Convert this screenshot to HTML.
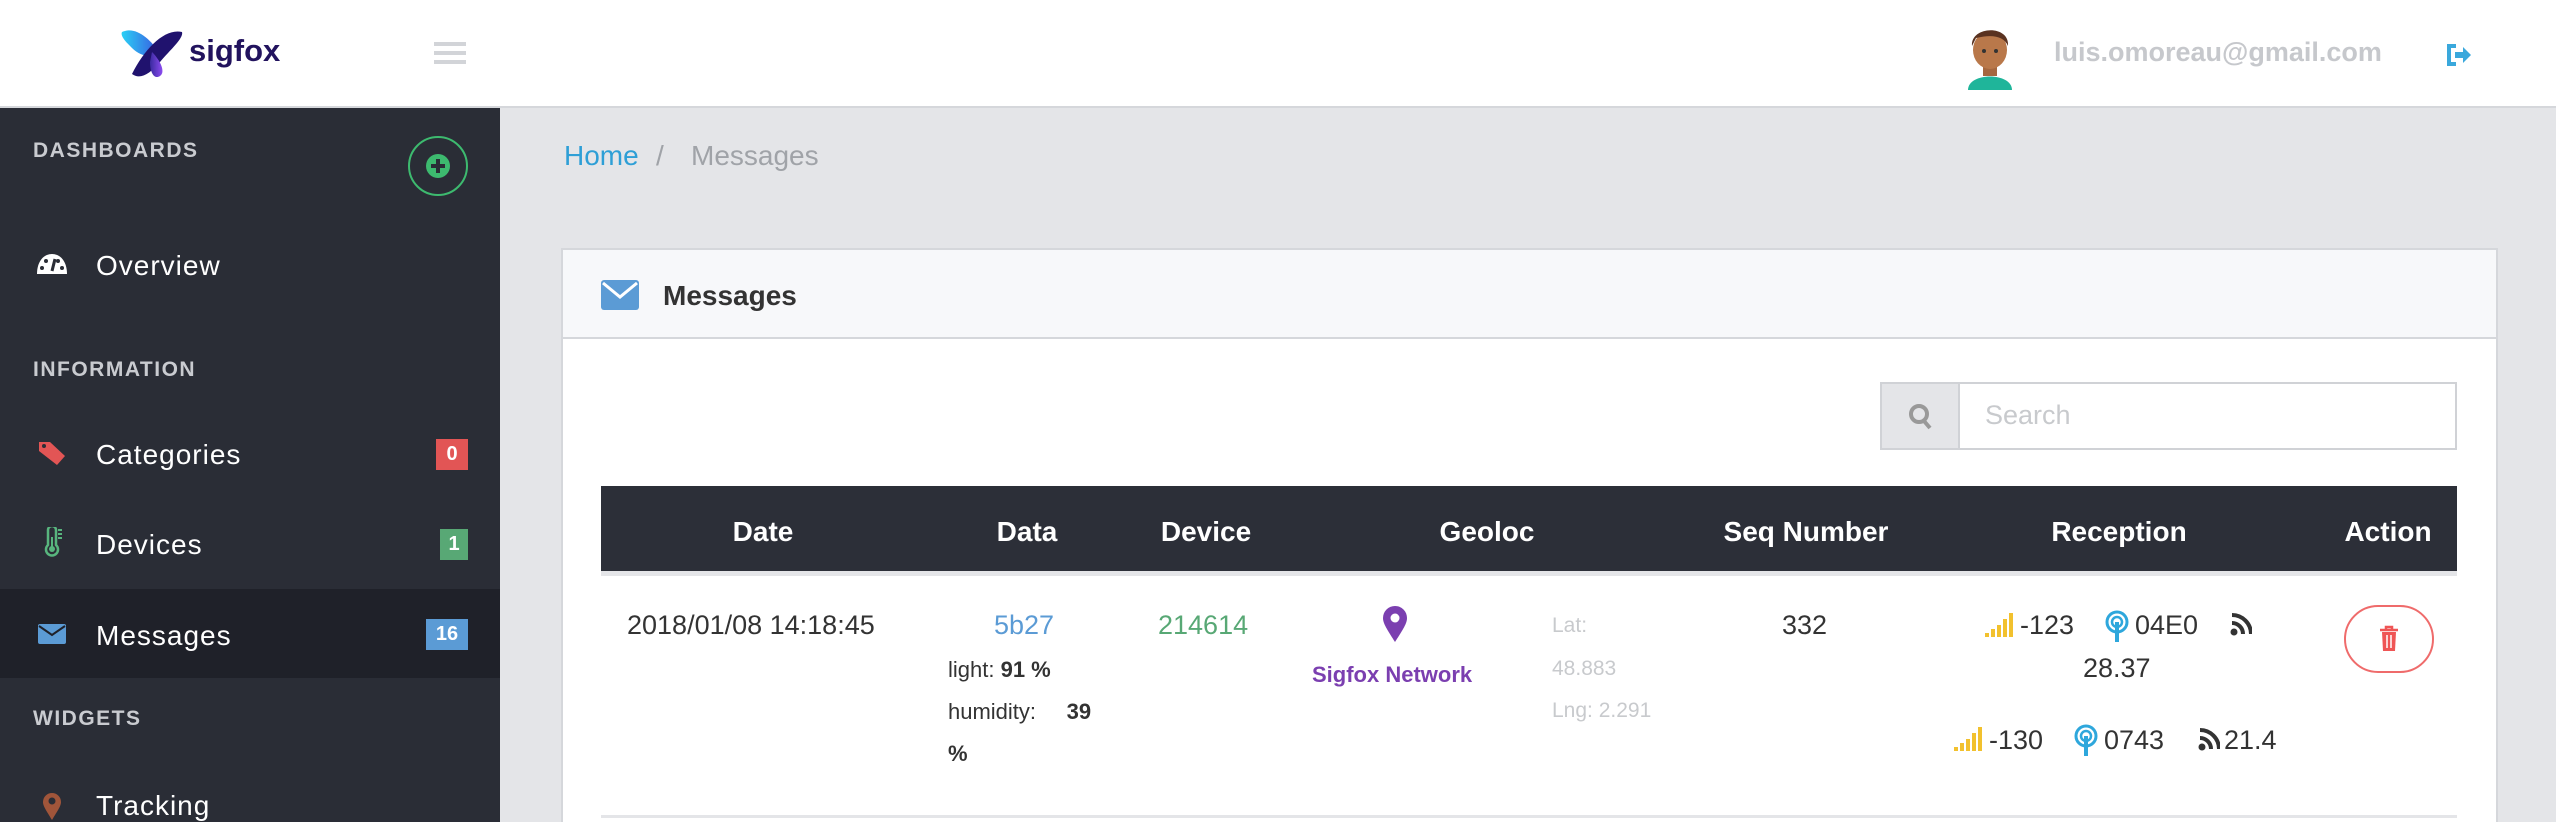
<!DOCTYPE html>
<html><head><meta charset="utf-8"><style>
*{margin:0;padding:0;box-sizing:border-box}
html{width:2556px;height:822px;overflow:hidden}
body{width:2556px;height:822px;overflow:hidden;background:#e4e5e8;font-family:"Liberation Sans",sans-serif;position:relative}
.a{position:absolute;white-space:nowrap}
.hdr{left:0;top:0;width:2556px;height:108px;background:#fff;border-bottom:2px solid #d5d7db}
.side{left:0;top:108px;width:500px;height:714px;background:#2a2d36}
.sec{color:#c9cbd0;font-size:21px;font-weight:bold;letter-spacing:1.5px;left:33px}
.item{color:#fff;font-size:28px;left:96px;letter-spacing:1px}
.badge{color:#fff;font-size:20px;font-weight:bold;text-align:center;height:31px;line-height:31px}
.th{color:#fff;font-size:28px;font-weight:bold;transform:translateX(-50%)}
.td{color:#333;font-size:27px}
.sm{color:#333;font-size:22px}
</style></head><body>
<div class="a hdr"></div>
<svg class="a" style="left:120px;top:28px" width="65" height="52" viewBox="0 0 65 52">
<defs><linearGradient id="g1" x1="0" x2="1"><stop offset="0" stop-color="#2ad0f5"/><stop offset="1" stop-color="#3a56e0"/></linearGradient>
<linearGradient id="g2" x1="0" x2="1"><stop offset="0" stop-color="#3a2aa0"/><stop offset="1" stop-color="#8c4cf0"/></linearGradient></defs>
<path d="M2 4 C15 -2 30 10 40 26 C30 30 20 28 12 20 C6 14 0 8 2 4Z" fill="url(#g1)"/>
<path d="M62 4 C45 0 25 20 12 46 C20 52 30 46 40 34 C50 22 64 10 62 4Z" fill="#20126e"/>
<path d="M32 24 C40 32 46 44 40 48 C34 52 30 44 30 34Z" fill="url(#g2)"/>
</svg>
<div class="a" style="left:189px;top:33px;font-size:31px;font-weight:bold;color:#22135e">sigfox</div>
<div class="a" style="left:434px;top:42px;width:32px;height:4px;background:#d2d4d8;box-shadow:0 9px 0 #d2d4d8,0 18px 0 #d2d4d8"></div>
<svg class="a" style="left:1962px;top:20px" width="56" height="70" viewBox="0 0 56 70">
<path d="M6 70 C6 52 50 52 50 70Z" fill="#1fb59a"/>
<rect x="21" y="44" width="14" height="12" fill="#a5673f"/>
<ellipse cx="28" cy="30" rx="17" ry="19" fill="#b9784a"/>
<path d="M10 26 C8 6 48 4 46 26 C42 16 30 14 14 18Z" fill="#5a3220"/>
<circle cx="22" cy="31" r="2" fill="#333"/><circle cx="34" cy="31" r="2" fill="#333"/>
</svg>
<div class="a" style="left:2054px;top:37px;font-size:27px;font-weight:bold;color:#c6c8cc">luis.omoreau@gmail.com</div>
<svg class="a" style="left:2446px;top:44px" width="26" height="22" viewBox="0 0 26 22"><path d="M10 2H3v18h7" stroke="#3aa8dc" stroke-width="4" fill="none"/><path d="M9 8h8V3l8 8-8 8v-5H9z" fill="#3aa8dc"/></svg>
<div class="a side"></div>
<div class="a" style="left:0;top:589px;width:500px;height:89px;background:#1f2129"></div>
<div class="a sec" style="top:139px">DASHBOARDS</div>
<div class="a" style="left:408px;top:136px;width:60px;height:60px;border:2px solid #3dba6f;border-radius:50%"></div>
<svg class="a" style="left:425px;top:153px" width="26" height="26" viewBox="0 0 26 26"><circle cx="13" cy="13" r="12" fill="#3dba6f"/><path d="M13 6v14M6 13h14" stroke="#2a2d36" stroke-width="4"/></svg>
<svg class="a" style="left:36px;top:253px" width="32" height="22" viewBox="0 0 32 22"><path d="M1 21C1 8 8 1 16 1s15 7 15 20z" fill="#fff"/><circle cx="6" cy="15" r="2" fill="#2a2d36"/><circle cx="10" cy="8" r="2" fill="#2a2d36"/><circle cx="22" cy="8" r="2" fill="#2a2d36"/><circle cx="26" cy="15" r="2" fill="#2a2d36"/><path d="M16 18L19 6" stroke="#2a2d36" stroke-width="3"/></svg>
<div class="a item" style="top:250px">Overview</div>
<div class="a sec" style="top:358px">INFORMATION</div>
<svg class="a" style="left:38px;top:440px" width="28" height="26" viewBox="0 0 28 26"><path d="M1 2h11l15 14-8 9L1 11z" fill="#e25555"/><circle cx="6" cy="6" r="2" fill="#2a2d36"/></svg>
<div class="a item" style="top:439px">Categories</div>
<div class="a badge" style="left:436px;top:439px;width:32px;background:#e25555">0</div>
<svg class="a" style="left:43px;top:527px" width="20" height="30" viewBox="0 0 20 30"><path d="M5 3a4 4 0 0 1 8 0v15a6 6 0 1 1-8 0z" stroke="#58b57e" stroke-width="2.5" fill="none"/><circle cx="9" cy="22" r="3" fill="#58b57e"/><path d="M9 10v12M15 3h4M15 7h4M15 11h4" stroke="#58b57e" stroke-width="2"/></svg>
<div class="a item" style="top:529px">Devices</div>
<div class="a badge" style="left:440px;top:529px;width:28px;background:#58a875">1</div>
<svg class="a" style="left:38px;top:624px" width="28" height="20" viewBox="0 0 28 20"><rect width="28" height="20" rx="2" fill="#5b9bd5"/><path d="M1 2l13 9 13-9" stroke="#1f2129" stroke-width="2" fill="none"/></svg>
<div class="a item" style="top:620px">Messages</div>
<div class="a badge" style="left:426px;top:619px;width:42px;background:#5b9bd5">16</div>
<div class="a sec" style="top:707px">WIDGETS</div>
<svg class="a" style="left:42px;top:792px" width="20" height="28" viewBox="0 0 20 28"><path d="M10 28C4 18 1 14 1 10a9 9 0 0 1 18 0c0 4-3 8-9 18z" fill="#a0553a"/><circle cx="10" cy="9" r="3.5" fill="#2a2d36"/></svg>
<div class="a item" style="top:790px">Tracking</div>
<div class="a" style="left:564px;top:140px;font-size:28px;color:#2e9fd6">Home</div>
<div class="a" style="left:656px;top:140px;font-size:28px;color:#a0a3a8">/</div>
<div class="a" style="left:691px;top:140px;font-size:28px;color:#a0a3a8">Messages</div>
<div class="a" style="left:561px;top:248px;width:1937px;height:574px;background:#fff;border:2px solid #d5d7db;border-bottom:none"></div>
<div class="a" style="left:563px;top:250px;width:1933px;height:89px;background:#f7f8fa;border-bottom:2px solid #d5d7db"></div>
<svg class="a" style="left:601px;top:280px" width="38" height="30" viewBox="0 0 38 30"><rect width="38" height="30" rx="3" fill="#5b9bd5"/><path d="M2 3l17 14 17-14" stroke="#fff" stroke-width="3" fill="none"/></svg>
<div class="a" style="left:663px;top:280px;font-size:28px;font-weight:bold;color:#333">Messages</div>
<div class="a" style="left:1880px;top:382px;width:577px;height:68px;border:2px solid #d0d2d6;background:#fff"></div>
<div class="a" style="left:1882px;top:384px;width:78px;height:64px;background:#e4e5e8;border-right:2px solid #d0d2d6"></div>
<svg class="a" style="left:1908px;top:403px" width="26" height="28" viewBox="0 0 26 28"><circle cx="11" cy="11" r="8" stroke="#999" stroke-width="4" fill="none"/><path d="M16 18l6 7" stroke="#999" stroke-width="4"/></svg>
<div class="a" style="left:1985px;top:400px;font-size:27px;color:#c8cacd">Search</div>
<div class="a" style="left:601px;top:486px;width:1856px;height:90px;background:#2c2f38;border-bottom:5px solid #e4e5e8"></div>
<div class="a th" style="left:763px;top:516px">Date</div>
<div class="a th" style="left:1027px;top:516px">Data</div>
<div class="a th" style="left:1206px;top:516px">Device</div>
<div class="a th" style="left:1487px;top:516px">Geoloc</div>
<div class="a th" style="left:1806px;top:516px">Seq Number</div>
<div class="a th" style="left:2119px;top:516px">Reception</div>
<div class="a th" style="left:2388px;top:516px">Action</div>
<div class="a td" style="left:627px;top:610px">2018/01/08 14:18:45</div>
<div class="a td" style="left:994px;top:610px;color:#5b9bd5">5b27</div>
<div class="a sm" style="left:948px;top:657px">light: <b>91 %</b></div>
<div class="a sm" style="left:948px;top:699px">humidity:&nbsp;&nbsp;&nbsp;&nbsp;&nbsp;<b>39</b></div>
<div class="a sm" style="left:948px;top:741px"><b>%</b></div>
<div class="a td" style="left:1158px;top:610px;color:#58a875">214614</div>
<svg class="a" style="left:1381px;top:606px" width="28" height="36" viewBox="0 0 28 36"><path d="M14 36C5 22 2 17 2 12a12 12 0 0 1 24 0c0 5-3 10-12 24z" fill="#7b3fb0"/><circle cx="14" cy="12" r="4.5" fill="#fff"/></svg>
<div class="a" style="left:1312px;top:662px;font-size:22px;font-weight:bold;color:#7b3fb0">Sigfox Network</div>
<div class="a" style="left:1552px;top:614px;font-size:21px;color:#c8cacd">Lat:</div>
<div class="a" style="left:1552px;top:657px;font-size:21px;color:#c8cacd">48.883</div>
<div class="a" style="left:1552px;top:699px;font-size:21px;color:#c8cacd">Lng: 2.291</div>
<div class="a td" style="left:1782px;top:610px">332</div>
<svg class="a" style="left:1985px;top:613px" width="30" height="24" viewBox="0 0 30 24"><g fill="#f2c12e"><rect x="0" y="20" width="4" height="4"/><rect x="6" y="16" width="4" height="8"/><rect x="12" y="12" width="4" height="12"/><rect x="18" y="6" width="4" height="18"/><rect x="24" y="0" width="4" height="24"/></g></svg>
<div class="a td" style="left:2020px;top:610px">-123</div>
<svg class="a" style="left:2104px;top:610px" width="26" height="32" viewBox="0 0 26 32"><circle cx="13" cy="12" r="10" stroke="#2ea7dc" stroke-width="3" fill="none"/><circle cx="13" cy="12" r="5" stroke="#2ea7dc" stroke-width="2.5" fill="none"/><path d="M13 12v20" stroke="#2ea7dc" stroke-width="4"/></svg>
<div class="a td" style="left:2135px;top:610px">04E0</div>
<svg class="a" style="left:2230px;top:612px" width="22" height="24" viewBox="0 0 22 24"><circle cx="4" cy="20" r="3.5" fill="#333"/><path d="M2 11a11 11 0 0 1 11 11M2 3a19 19 0 0 1 19 19" stroke="#333" stroke-width="4" fill="none"/></svg>
<div class="a td" style="left:2083px;top:653px">28.37</div>
<svg class="a" style="left:1954px;top:727px" width="30" height="24" viewBox="0 0 30 24"><g fill="#f2c12e"><rect x="0" y="20" width="4" height="4"/><rect x="6" y="16" width="4" height="8"/><rect x="12" y="12" width="4" height="12"/><rect x="18" y="6" width="4" height="18"/><rect x="24" y="0" width="4" height="24"/></g></svg>
<div class="a td" style="left:1989px;top:725px">-130</div>
<svg class="a" style="left:2073px;top:724px" width="26" height="32" viewBox="0 0 26 32"><circle cx="13" cy="12" r="10" stroke="#2ea7dc" stroke-width="3" fill="none"/><circle cx="13" cy="12" r="5" stroke="#2ea7dc" stroke-width="2.5" fill="none"/><path d="M13 12v20" stroke="#2ea7dc" stroke-width="4"/></svg>
<div class="a td" style="left:2104px;top:725px">0743</div>
<svg class="a" style="left:2198px;top:727px" width="22" height="24" viewBox="0 0 22 24"><circle cx="4" cy="20" r="3.5" fill="#333"/><path d="M2 11a11 11 0 0 1 11 11M2 3a19 19 0 0 1 19 19" stroke="#333" stroke-width="4" fill="none"/></svg>
<div class="a td" style="left:2224px;top:725px">21.4</div>
<div class="a" style="left:2344px;top:605px;width:90px;height:68px;border:2px solid #ef6b6b;border-radius:34px"></div>
<svg class="a" style="left:2379px;top:625px" width="20" height="26" viewBox="0 0 20 26"><path d="M1 5h18M7 5V2h6v3" stroke="#ef5555" stroke-width="2.5" fill="none"/><path d="M3 7h14l-1 19H4z" fill="#ef5555"/><path d="M8 10v13M12 10v13" stroke="#fff" stroke-width="1.5"/></svg>
<div class="a" style="left:601px;top:815px;width:1856px;height:3px;background:#e4e5e8"></div>
</body></html>
